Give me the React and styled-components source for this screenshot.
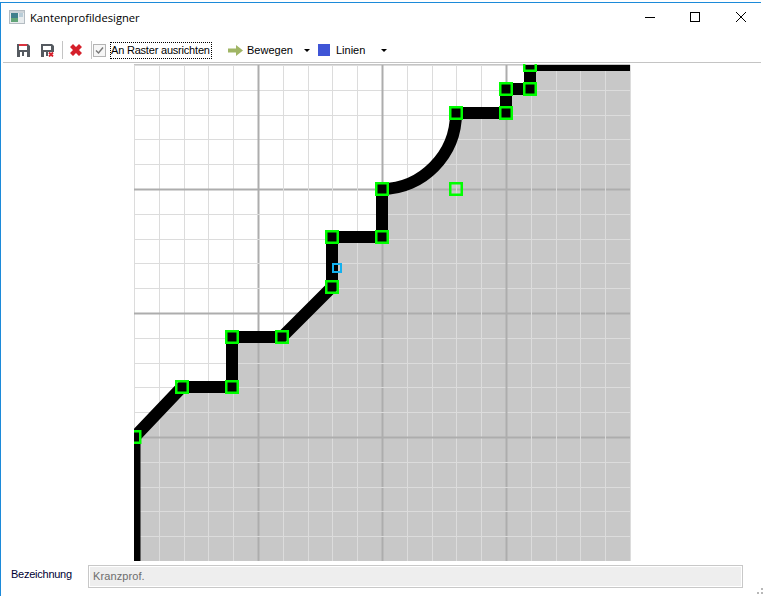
import React from 'react';
import styled, { createGlobalStyle } from 'styled-components';

const GlobalStyle = createGlobalStyle`
    html, body {
        margin: 0;
        padding: 0;
        background: #ffffff;
    }
`;

const Window = styled.div`
    box-sizing: border-box;
    width: 761px;
    height: 594px;
    margin-top: 2px;
    display: flex;
    flex-direction: column;
    background: #ffffff;
    border-top: 1px solid #1c8ad9;
    border-left: 1px solid #1c8ad9;
    font-family: 'Liberation Sans', sans-serif;
    position: relative;
`;

const TitleBar = styled.div`
    box-sizing: border-box;
    height: 30px;
    display: flex;
    align-items: center;
    padding: 0 0 2px 8px;
    flex: none;
`;

const TitleText = styled.span`
    margin-left: 5px;
    font-family: 'Open Sans', sans-serif;
    font-size: 11.2px;
    color: #000000;
`;

const WindowButtons = styled.div`
    margin-left: auto;
    margin-right: -3px;
    display: flex;
`;

const WindowButton = styled.div`
    width: ${p => p.$width}px;
    height: 28px;
    display: flex;
    align-items: center;
    justify-content: center;
`;

const Toolbar = styled.div`
    height: 30px;
    flex: none;
    display: flex;
    align-items: center;
    margin-left: 2px;
    padding: 5px 0 0 14px;
    box-sizing: border-box;
    border-bottom: 1px solid #c4c4c4;
`;

const ToolIcon = styled.svg`
    flex: none;
    display: block;
    margin-right: ${p => p.$gap}px;
`;

const Separator = styled.div`
    width: 1px;
    height: 18px;
    background: #c4c4c4;
    margin-right: ${p => p.$gap}px;
`;

const CheckBox = styled.div`
    box-sizing: border-box;
    width: 13px;
    height: 13px;
    border: 1px solid #b4b4b4;
    background: #f6f6f6;
    display: flex;
    align-items: center;
    justify-content: center;
    margin-right: 4px;
`;

const FocusLabel = styled.div`
    box-sizing: border-box;
    width: 102px;
    height: 17px;
    line-height: 15px;
    border: 1px dotted #000000;
    font-size: 11px;
    letter-spacing: -0.2px;
    color: #000000;
    white-space: nowrap;
    margin-right: 16px;
`;

const MenuText = styled.span`
    font-size: 11px;
    color: #000000;
    width: ${p => p.$width}px;
    flex: none;
`;

const Caret = styled.span`
    width: 0;
    height: 0;
    border-left: 3px solid transparent;
    border-right: 3px solid transparent;
    border-top: 3px solid #000000;
    margin-right: ${p => p.$gap}px;
`;

const Swatch = styled.div`
    width: 12px;
    height: 12px;
    background: #3f55d6;
    margin-right: 6px;
`;

const CanvasRow = styled.div`
    height: 498px;
    flex: none;
    padding-left: 133px;
    padding-top: 1px;
    box-sizing: border-box;
`;

const Footer = styled.div`
    flex: none;
    display: flex;
    align-items: center;
    height: 30px;
    padding-left: 10px;
`;

const FieldLabel = styled.span`
    width: 77px;
    margin-bottom: 4px;
    font-size: 11px;
    letter-spacing: -0.25px;
    color: #000033;
`;

const TextField = styled.div`
    box-sizing: border-box;
    width: 655px;
    height: 23px;
    border: 1px solid #c8c8c8;
    box-shadow: inset 0 0 0 1px #ffffff;
    background: #eeeeee;
    padding-left: 4px;
    line-height: 21px;
    font-size: 11px;
    letter-spacing: 0.1px;
    color: #6d6d6d;
`;

const BottomEdge = styled.div`
    position: absolute;
    left: -1px;
    right: 0;
    bottom: -4px;
    height: 1px;
    background: #1c8ad9;
`;

const Grip = styled.svg`
    position: absolute;
    right: -3px;
    bottom: -4px;
`;

const AppIcon = () => (
    <svg width="16" height="14" viewBox="0 0 16 14">
        <rect x="0.5" y="0.5" width="15" height="13" fill="#e8ecee" stroke="#b4bcc2" />
        <rect x="2" y="3" width="7" height="9" fill="#3f7f8c" />
        <rect x="2" y="8" width="7" height="4" fill="#62a578" />
        <rect x="10" y="3" width="4" height="4" fill="#b9cdd8" />
        <rect x="1" y="1" width="14" height="2" fill="#ccd3d8" />
    </svg>
);

const SaveIcon = ({ cross, gap }) => (
    <ToolIcon $gap={gap} width="13" height="13" viewBox="0 0 13 13">
        <path d="M0 0h11l2 2v11H0z" fill="#555a60" />
        <rect x="2" y="1" width="8" height="5" fill="#ffffff" />
        <rect x="2" y="0" width="8" height="2" fill={cross ? '#555a60' : '#d9333f'} />
        <rect x="3" y="8" width="7" height="5" fill="#ffffff" />
        <rect x="5" y="8" width="2" height="4" fill="#555a60" />
        {cross && <path d="M7 8h6v5H7z" fill="#ffffff" />}
        {cross && <path d="M8 8.5l4 4M12 8.5l-4 4" stroke="#d8202c" strokeWidth="1.8" />}
    </ToolIcon>
);

const DeleteIcon = () => (
    <ToolIcon $gap={9} width="12" height="12" viewBox="0 0 12 12">
        <path d="M0 3l3-3 3 3 3-3 3 3-3 3 3 3-3 3-3-3-3 3-3-3 3-3z" fill="#d5202b" />
    </ToolIcon>
);

const ArrowIcon = () => (
    <ToolIcon $gap={4} width="15" height="11" viewBox="0 0 15 11">
        <path d="M0 3.5h8V0l7 5.5-7 5.5V7.5H0z" fill="#a0b565" />
    </ToolIcon>
);

// profile geometry in page coordinates, the svg is moved by its own viewBox
const left = 134;
const top = 65;
const right = 630;
const bottom = 561;
const step = 24.8;

const handles = [
    [134.5, 437], [182, 387], [232, 387], [232, 337], [282, 337], [332, 287], [332, 237],
    [382, 237], [382, 189], [456, 113], [506, 113], [506, 89], [530, 89], [530, 65],
    [456, 189],
];

const outline = 'M134.5 561V437L182 387H232V337H282L332 287V237H382V189C422 189 456 155 456 113H506V89H530V65H630';

const gridLines = Array.from({ length: 21 }, (_, i) => i);

function ProfileCanvas() {
    return (
        <svg width="497" height="497" viewBox="134 64 497 497" style={{ display: 'block' }}>
            <rect x={left} y={top} width={right - left} height={bottom - top} fill="#ffffff" />
            <path d={`${outline}V561Z`} fill="#c8c8c8" />
            {gridLines.map(i => {
                const major = i % 5 === 0;
                const x = Math.round(left + i * step) + 0.5;
                const y = Math.round(top + i * step) - 0.5;
                const color = major && i > 0 && i < 20 ? '#adadad' : '#dcdcdc';
                const width = major && i > 0 && i < 20 ? 2 : 1;
                return (
                    <g key={i} stroke={color} strokeWidth={width}>
                        <line x1={x} y1={top} x2={x} y2={bottom} />
                        <line x1={left} y1={y + 1} x2={right} y2={y + 1} />
                    </g>
                );
            })}
            <path d={outline} fill="none" stroke="#000000" strokeWidth="12" />
            <rect x="134" y="64" width="496" height="1" fill="#c4c4c4" />
            {handles.map(([x, y]) => (
                <rect key={`${x}-${y}`} x={x - 5.75} y={y - 5.75} width="11.5" height="11.5" fill="none" stroke="#00ff00" strokeWidth="2.5" />
            ))}
            <rect x="333" y="264" width="8" height="8" fill="none" stroke="#12b0ee" strokeWidth="2" />
        </svg>
    );
}

export default function App() {
    return (
        <>
            <GlobalStyle />
            <Window>
                <TitleBar>
                    <AppIcon />
                    <TitleText>Kantenprofildesigner</TitleText>
                    <WindowButtons>
                        <WindowButton $width={45}>
                            <svg width="10" height="10" viewBox="0 0 10 10"><path d="M0 5.5h10" stroke="#000" /></svg>
                        </WindowButton>
                        <WindowButton $width={45}>
                            <svg width="10" height="10" viewBox="0 0 10 10"><rect x="0.5" y="0.5" width="9" height="9" fill="none" stroke="#000" /></svg>
                        </WindowButton>
                        <WindowButton $width={47}>
                            <svg width="10" height="10" viewBox="0 0 10 10"><path d="M0 0l10 10M10 0L0 10" stroke="#000" /></svg>
                        </WindowButton>
                    </WindowButtons>
                </TitleBar>
                <Toolbar>
                    <SaveIcon gap={11} />
                    <SaveIcon cross gap={8} />
                    <Separator $gap={7} />
                    <DeleteIcon />
                    <Separator $gap={1} />
                    <CheckBox>
                        <svg width="11" height="11" viewBox="0 0 11 11">
                            <path d="M2 5.5l2.5 2.5L9 2.5" fill="none" stroke="#777" strokeWidth="1.4" />
                        </svg>
                    </CheckBox>
                    <FocusLabel>An Raster ausrichten</FocusLabel>
                    <ArrowIcon />
                    <MenuText $width={57}>Bewegen</MenuText>
                    <Caret $gap={8} />
                    <Swatch />
                    <MenuText $width={45}>Linien</MenuText>
                    <Caret $gap={0} />
                </Toolbar>
                <CanvasRow>
                    <ProfileCanvas />
                </CanvasRow>
                <Footer>
                    <FieldLabel>Bezeichnung</FieldLabel>
                    <TextField>Kranzprof.</TextField>
                </Footer>
                <BottomEdge />
                <Grip width="12" height="12" viewBox="0 0 12 12" fill="#b8b8b8">
                    <rect x="9" y="0" width="2" height="2" />
                    <rect x="5" y="4" width="2" height="2" />
                    <rect x="9" y="4" width="2" height="2" />
                    <rect x="1" y="8" width="2" height="2" />
                    <rect x="5" y="8" width="2" height="2" />
                    <rect x="9" y="8" width="2" height="2" />
                </Grip>
            </Window>
        </>
    );
}
